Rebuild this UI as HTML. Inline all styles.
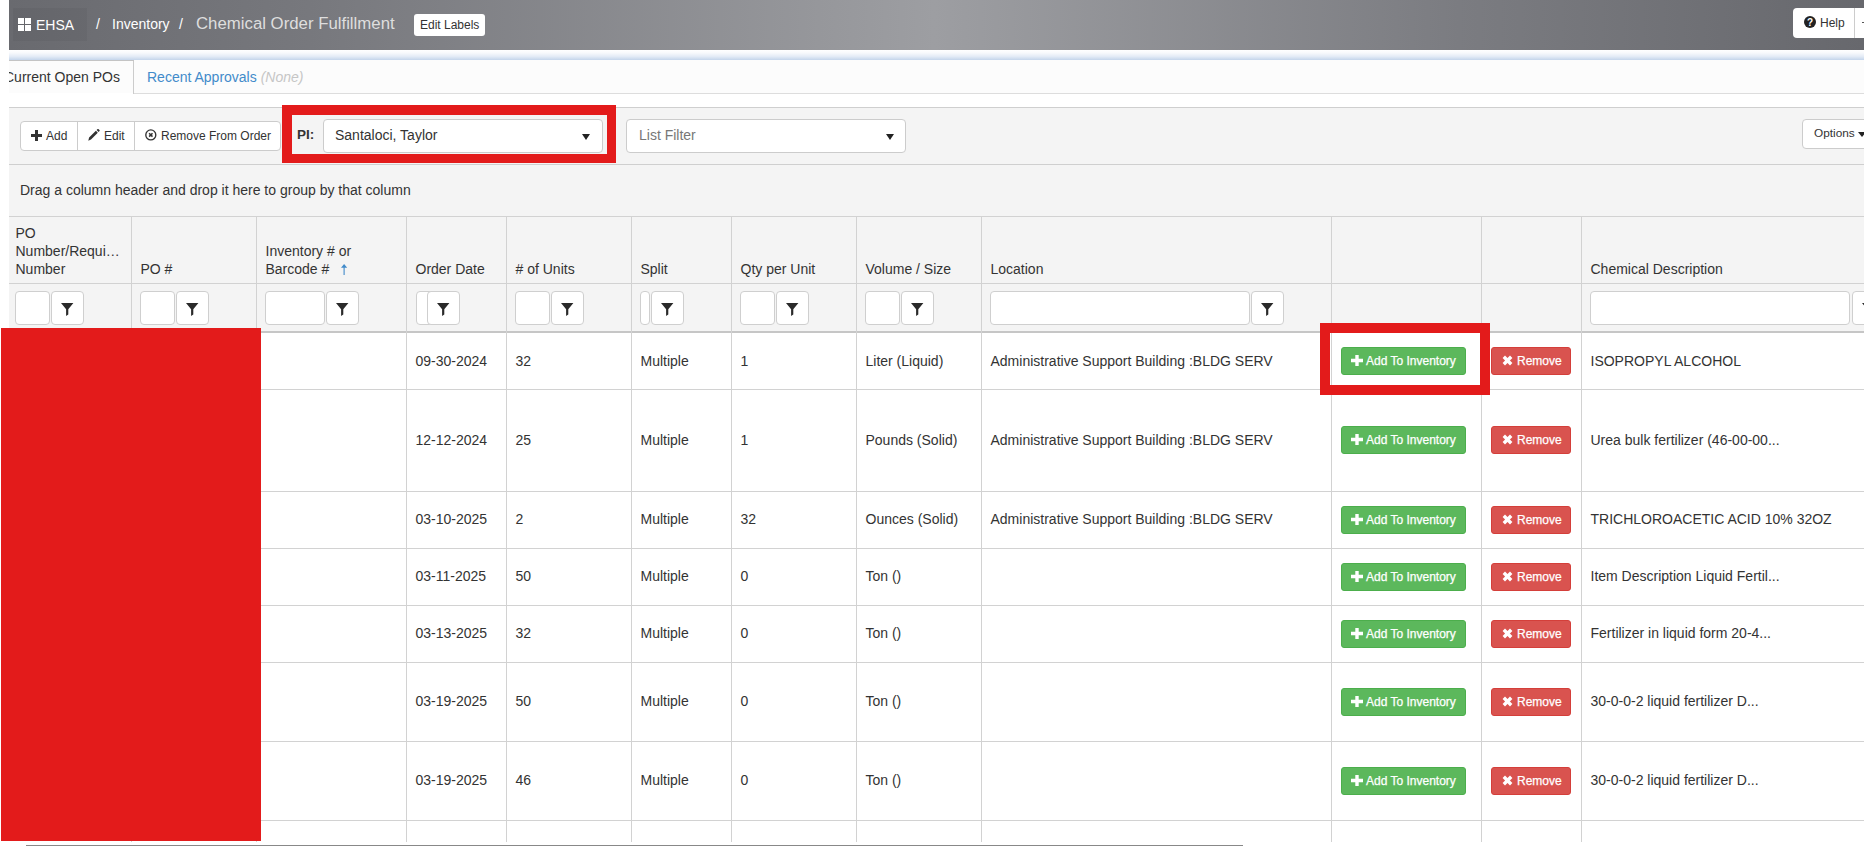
<!DOCTYPE html>
<html><head><meta charset="utf-8">
<style>
*{box-sizing:border-box;margin:0;padding:0}
html,body{width:1864px;height:846px;overflow:hidden;background:#fff;font-family:"Liberation Sans",sans-serif;color:#333}
.a{position:absolute}
.t{position:absolute;white-space:nowrap;line-height:1}
.vl{position:absolute;width:1px;background:#d2d2d2}
.hl{position:absolute;height:1px;background:#d2d2d2}
.box{position:absolute;background:#fff;border:1px solid #cfcfcf;border-radius:4px}
.fb svg{position:absolute;left:9px;top:11px}
.gb{position:absolute;width:125px;height:28px;background:#5cb85c;border:1px solid #4cae4c;border-radius:3px}
.rb{position:absolute;width:80px;height:28px;background:#d9534f;border:1px solid #d43f3a;border-radius:3px}
</style></head><body>

<div class="a" style="left:9px;top:0;width:1855px;height:50px;background:linear-gradient(to right,#696a6f 0px,#77787d 300px,#999a9e 860px,#9d9ea2 925px,#7b7c81 1450px,#67686d 1855px)"></div>
<div class="a" style="left:9px;top:50px;width:1855px;height:10px;background:linear-gradient(to bottom,#ffffff 0%,#f7f9fc 30%,#e3ebf6 65%,#c4d5eb 100%)"></div>
<div class="a" style="left:13px;top:8px;width:74px;height:33px;background:rgba(0,0,0,0.04)"></div>
<div class="a" style="left:18px;top:18px;width:6px;height:6px;background:#fff"></div>
<div class="a" style="left:25px;top:18px;width:6px;height:6px;background:#fff"></div>
<div class="a" style="left:18px;top:25px;width:6px;height:6px;background:#fff"></div>
<div class="a" style="left:25px;top:25px;width:6px;height:6px;background:#fff"></div>
<div class="t" style="left:36px;top:18px;font-size:14px;color:#fff;">EHSA</div>
<div class="t" style="left:96px;top:17px;font-size:14px;color:#fff;">/</div>
<div class="t" style="left:112px;top:17px;font-size:14px;color:#fff;">Inventory</div>
<div class="t" style="left:179px;top:17px;font-size:14px;color:#fff;">/</div>
<div class="t" style="left:196px;top:15.5px;font-size:16.8px;color:#dedede;">Chemical Order Fulfillment</div>
<div class="a" style="left:414px;top:14px;width:71px;height:22px;background:#fff;border-radius:3px"></div>
<div class="t" style="left:420px;top:19px;font-size:12px;color:#333;">Edit Labels</div>
<div class="a" style="left:1793px;top:8px;width:80px;height:30px;background:#fff;border-radius:4px"></div>
<div class="a" style="left:1854px;top:8px;width:1px;height:30px;background:#ccc"></div>
<svg class="a" style="left:1804px;top:16px" width="12" height="12" viewBox="0 0 12 12"><circle cx="6" cy="6" r="6" fill="#222"/><text x="6" y="9.6" font-size="10" font-weight="bold" fill="#fff" text-anchor="middle" font-family="Liberation Sans">?</text></svg>
<div class="t" style="left:1820px;top:17px;font-size:12px;color:#333;">Help</div>
<div class="a" style="left:1862px;top:22px;width:2px;height:1px;background:#555"></div>
<div class="a" style="left:9px;top:60px;width:1855px;height:33px;background:#fcfcfc"></div>
<div class="hl" style="left:133px;top:93px;width:1731px;background:#ddd"></div>
<div class="a" style="left:133px;top:60px;width:1px;height:34px;background:#ccc"></div>
<div class="a" style="left:9px;top:60px;width:125px;height:1px;background:#c4c4c4"></div>
<div class="a" style="left:9px;top:61px;width:124px;height:32px;overflow:hidden"><div class="t" style="left:-5px;top:9px;font-size:14px;color:#333;">Current Open POs</div></div>
<div class="t" style="left:147px;top:70px;font-size:14px;color:#428bca;">Recent Approvals <i style="color:#c6c6c6">(None)</i></div>
<div class="a" style="left:9px;top:107px;width:1855px;height:109px;background:#f4f4f4"></div>
<div class="hl" style="left:9px;top:107px;width:1855px;background:#cfcfcf"></div>
<div class="hl" style="left:9px;top:164px;width:1855px;background:#cfcfcf"></div>
<div class="a" style="left:20px;top:121px;width:261px;height:30px;background:#fff;border:1px solid #ccc;border-radius:4px"></div>
<div class="a" style="left:77px;top:122px;width:1px;height:28px;background:#ccc"></div>
<div class="a" style="left:134px;top:122px;width:1px;height:28px;background:#ccc"></div>
<svg class="a" style="left:31px;top:130px" width="11" height="11" viewBox="0 0 11 11"><path d="M4 0H7V4H11V7H7V11H4V7H0V4H4Z" fill="#333"/></svg>
<div class="t" style="left:46px;top:130px;font-size:12px;color:#333;">Add</div>
<svg class="a" style="left:88px;top:129px" width="12" height="12" viewBox="0 0 12 12"><path d="M0.3 11.7 L1.1 8.6 L7.9 1.8 L9.8 3.7 L3 10.5 Z M8.6 1.1 L9.6 0.1 Q10.1 -0.3 10.6 0.2 L11.5 1.1 Q11.9 1.6 11.5 2.1 L10.5 3.1 Z" fill="#333"/></svg>
<div class="t" style="left:104px;top:130px;font-size:12px;color:#333;">Edit</div>
<svg class="a" style="left:145px;top:129px" width="12" height="12" viewBox="0 0 12 12"><circle cx="5.8" cy="5.9" r="5.0" fill="none" stroke="#333" stroke-width="1.35"/><path d="M4.1 4.2L7.5 7.6M7.5 4.2L4.1 7.6" stroke="#333" stroke-width="1.5"/></svg>
<div class="t" style="left:161px;top:130px;font-size:12px;color:#333;">Remove From Order</div>
<div class="t" style="left:297px;top:128px;font-size:13.5px;font-weight:bold;color:#333">PI:</div>
<div class="a" style="left:323px;top:119px;width:280px;height:34px;background:#fff;border:1px solid #ccc;border-radius:4px"></div>
<div class="t" style="left:335px;top:128px;font-size:14px;color:#333;">Santaloci, Taylor</div>
<svg class="a" style="left:581.5px;top:134px" width="8" height="6" viewBox="0 0 8 6"><path d="M0 0H8L4 6Z" fill="#222"/></svg>
<div class="a" style="left:626px;top:119px;width:280px;height:34px;background:#fff;border:1px solid #ccc;border-radius:4px"></div>
<div class="t" style="left:639px;top:128px;font-size:14px;color:#777;">List Filter</div>
<svg class="a" style="left:885.5px;top:134px" width="8" height="6" viewBox="0 0 8 6"><path d="M0 0H8L4 6Z" fill="#222"/></svg>
<div class="a" style="left:1802px;top:119px;width:80px;height:30px;background:#fff;border:1px solid #ccc;border-radius:4px"></div>
<div class="t" style="left:1814px;top:128px;font-size:11.8px;color:#333;">Options</div>
<svg class="a" style="left:1858px;top:132px" width="8" height="5" viewBox="0 0 8 5"><path d="M0 0H8L4 5Z" fill="#222"/></svg>
<div class="t" style="left:20px;top:183.2px;font-size:14px;color:#333;">Drag a column header and drop it here to group by that column</div>
<div class="a" style="left:9px;top:216px;width:1855px;height:117px;background:#f4f4f4"></div>
<div class="hl" style="left:9px;top:216px;width:1855px"></div>
<div class="hl" style="left:9px;top:283px;width:1855px"></div>
<div class="a" style="left:9px;top:331px;width:1855px;height:2px;background:#c6c6c6"></div>
<div class="vl" style="left:131px;top:216px;height:626px"></div>
<div class="vl" style="left:256px;top:216px;height:626px"></div>
<div class="vl" style="left:406px;top:216px;height:626px"></div>
<div class="vl" style="left:506px;top:216px;height:626px"></div>
<div class="vl" style="left:631px;top:216px;height:626px"></div>
<div class="vl" style="left:731px;top:216px;height:626px"></div>
<div class="vl" style="left:856px;top:216px;height:626px"></div>
<div class="vl" style="left:981px;top:216px;height:626px"></div>
<div class="vl" style="left:1331px;top:216px;height:626px"></div>
<div class="vl" style="left:1481px;top:216px;height:626px"></div>
<div class="vl" style="left:1581px;top:216px;height:626px"></div>
<div class="t" style="left:15.5px;top:226px;font-size:14px;color:#333;">PO</div>
<div class="t" style="left:15.5px;top:244px;font-size:14px;color:#333;">Number/Requi…</div>
<div class="t" style="left:15.5px;top:262px;font-size:14px;color:#333;">Number</div>
<div class="t" style="left:140.5px;top:262px;font-size:14px;color:#333;">PO #</div>
<div class="t" style="left:265.5px;top:244px;font-size:14px;color:#333;">Inventory # or</div>
<div class="t" style="left:265.5px;top:262px;font-size:14px;color:#333;">Barcode #</div>
<svg class="a" style="left:340.5px;top:264px" width="7" height="11" viewBox="0 0 7 11"><path d="M3.1 0L6.2 3.7H3.65V11H2.55V3.7H0Z" fill="#428bca"/></svg>
<div class="t" style="left:415.5px;top:262px;font-size:14px;color:#333;">Order Date</div>
<div class="t" style="left:515.5px;top:262px;font-size:14px;color:#333;"># of Units</div>
<div class="t" style="left:640.5px;top:262px;font-size:14px;color:#333;">Split</div>
<div class="t" style="left:740.5px;top:262px;font-size:14px;color:#333;">Qty per Unit</div>
<div class="t" style="left:865.5px;top:262px;font-size:14px;color:#333;">Volume / Size</div>
<div class="t" style="left:990.5px;top:262px;font-size:14px;color:#333;">Location</div>
<div class="t" style="left:1590.5px;top:262px;font-size:14px;color:#333;">Chemical Description</div>
<div class="box" style="left:15px;top:291px;width:35px;height:34px"></div>
<div class="box fb" style="left:51px;top:291px;width:33px;height:34px"><svg width="13" height="13" viewBox="0 0 13 13"><path d="M0 0 H12.4 L7.3 6.2 V11.6 L5.1 13 V6.2 Z" fill="#2a2a2a"/></svg></div>
<div class="box" style="left:140px;top:291px;width:35px;height:34px"></div>
<div class="box fb" style="left:176px;top:291px;width:33px;height:34px"><svg width="13" height="13" viewBox="0 0 13 13"><path d="M0 0 H12.4 L7.3 6.2 V11.6 L5.1 13 V6.2 Z" fill="#2a2a2a"/></svg></div>
<div class="box" style="left:265px;top:291px;width:60px;height:34px"></div>
<div class="box fb" style="left:326px;top:291px;width:33px;height:34px"><svg width="13" height="13" viewBox="0 0 13 13"><path d="M0 0 H12.4 L7.3 6.2 V11.6 L5.1 13 V6.2 Z" fill="#2a2a2a"/></svg></div>
<div class="box" style="left:416px;top:291px;width:20px;height:34px"></div>
<div class="box fb" style="left:427px;top:291px;width:33px;height:34px"><svg width="13" height="13" viewBox="0 0 13 13"><path d="M0 0 H12.4 L7.3 6.2 V11.6 L5.1 13 V6.2 Z" fill="#2a2a2a"/></svg></div>
<div class="box" style="left:515px;top:291px;width:35px;height:34px"></div>
<div class="box fb" style="left:551px;top:291px;width:33px;height:34px"><svg width="13" height="13" viewBox="0 0 13 13"><path d="M0 0 H12.4 L7.3 6.2 V11.6 L5.1 13 V6.2 Z" fill="#2a2a2a"/></svg></div>
<div class="box" style="left:640px;top:291px;width:10px;height:34px"></div>
<div class="box fb" style="left:651px;top:291px;width:33px;height:34px"><svg width="13" height="13" viewBox="0 0 13 13"><path d="M0 0 H12.4 L7.3 6.2 V11.6 L5.1 13 V6.2 Z" fill="#2a2a2a"/></svg></div>
<div class="box" style="left:740px;top:291px;width:35px;height:34px"></div>
<div class="box fb" style="left:776px;top:291px;width:33px;height:34px"><svg width="13" height="13" viewBox="0 0 13 13"><path d="M0 0 H12.4 L7.3 6.2 V11.6 L5.1 13 V6.2 Z" fill="#2a2a2a"/></svg></div>
<div class="box" style="left:865px;top:291px;width:35px;height:34px"></div>
<div class="box fb" style="left:901px;top:291px;width:33px;height:34px"><svg width="13" height="13" viewBox="0 0 13 13"><path d="M0 0 H12.4 L7.3 6.2 V11.6 L5.1 13 V6.2 Z" fill="#2a2a2a"/></svg></div>
<div class="box" style="left:990px;top:291px;width:260px;height:34px"></div>
<div class="box fb" style="left:1251px;top:291px;width:33px;height:34px"><svg width="13" height="13" viewBox="0 0 13 13"><path d="M0 0 H12.4 L7.3 6.2 V11.6 L5.1 13 V6.2 Z" fill="#2a2a2a"/></svg></div>
<div class="box" style="left:1590px;top:291px;width:260px;height:34px"></div>
<div class="box fb" style="left:1852px;top:291px;width:34px;height:34px"><svg width="13" height="13" viewBox="0 0 13 13"><path d="M0 0 H12.4 L7.3 6.2 V11.6 L5.1 13 V6.2 Z" fill="#2a2a2a"/></svg></div>
<div class="a" style="left:9px;top:333px;width:1855px;height:513px;background:#fff"></div>
<div class="vl" style="left:131px;top:333px;height:509px"></div>
<div class="vl" style="left:256px;top:333px;height:509px"></div>
<div class="vl" style="left:406px;top:333px;height:509px"></div>
<div class="vl" style="left:506px;top:333px;height:509px"></div>
<div class="vl" style="left:631px;top:333px;height:509px"></div>
<div class="vl" style="left:731px;top:333px;height:509px"></div>
<div class="vl" style="left:856px;top:333px;height:509px"></div>
<div class="vl" style="left:981px;top:333px;height:509px"></div>
<div class="vl" style="left:1331px;top:333px;height:509px"></div>
<div class="vl" style="left:1481px;top:333px;height:509px"></div>
<div class="vl" style="left:1581px;top:333px;height:509px"></div>
<div class="hl" style="left:9px;top:389px;width:1855px"></div>
<div class="hl" style="left:9px;top:491px;width:1855px"></div>
<div class="hl" style="left:9px;top:548px;width:1855px"></div>
<div class="hl" style="left:9px;top:605px;width:1855px"></div>
<div class="hl" style="left:9px;top:662px;width:1855px"></div>
<div class="hl" style="left:9px;top:741px;width:1855px"></div>
<div class="hl" style="left:9px;top:820px;width:1855px"></div>
<div class="t" style="left:415.5px;top:354px;font-size:14px;color:#333;">09-30-2024</div>
<div class="t" style="left:515.5px;top:354px;font-size:14px;color:#333;">32</div>
<div class="t" style="left:640.5px;top:354px;font-size:14px;color:#333;">Multiple</div>
<div class="t" style="left:740.5px;top:354px;font-size:14px;color:#333;">1</div>
<div class="t" style="left:865.5px;top:354px;font-size:14px;color:#333;">Liter (Liquid)</div>
<div class="t" style="left:990.5px;top:354px;font-size:14px;color:#333;">Administrative Support Building :BLDG SERV</div>
<div class="t" style="left:1590.5px;top:354px;font-size:14px;color:#333;">ISOPROPYL ALCOHOL</div>
<div class="gb" style="left:1341px;top:347px"></div>
<div class="t" style="left:1366px;top:355px;font-size:12px;color:#fff;-webkit-text-stroke:0.25px #fff">Add To Inventory</div>
<svg class="a" style="left:1351px;top:355px" width="12" height="11" viewBox="0 0 12 11"><path d="M4.3 0H7.7V3.8H12V7.2H7.7V11H4.3V7.2H0V3.8H4.3Z" fill="#fff"/></svg>
<div class="rb" style="left:1491px;top:347px"></div>
<div class="t" style="left:1517px;top:355px;font-size:12px;color:#fff;-webkit-text-stroke:0.25px #fff">Remove</div>
<svg class="a" style="left:1502px;top:354.5px" width="11" height="11" viewBox="0 0 11 11"><path d="M1.8 1.8L9.2 9.2M9.2 1.8L1.8 9.2" stroke="#fff" stroke-width="3.4"/></svg>
<div class="t" style="left:415.5px;top:433px;font-size:14px;color:#333;">12-12-2024</div>
<div class="t" style="left:515.5px;top:433px;font-size:14px;color:#333;">25</div>
<div class="t" style="left:640.5px;top:433px;font-size:14px;color:#333;">Multiple</div>
<div class="t" style="left:740.5px;top:433px;font-size:14px;color:#333;">1</div>
<div class="t" style="left:865.5px;top:433px;font-size:14px;color:#333;">Pounds (Solid)</div>
<div class="t" style="left:990.5px;top:433px;font-size:14px;color:#333;">Administrative Support Building :BLDG SERV</div>
<div class="t" style="left:1590.5px;top:433px;font-size:14px;color:#333;">Urea bulk fertilizer (46-00-00...</div>
<div class="gb" style="left:1341px;top:426px"></div>
<div class="t" style="left:1366px;top:434px;font-size:12px;color:#fff;-webkit-text-stroke:0.25px #fff">Add To Inventory</div>
<svg class="a" style="left:1351px;top:434px" width="12" height="11" viewBox="0 0 12 11"><path d="M4.3 0H7.7V3.8H12V7.2H7.7V11H4.3V7.2H0V3.8H4.3Z" fill="#fff"/></svg>
<div class="rb" style="left:1491px;top:426px"></div>
<div class="t" style="left:1517px;top:434px;font-size:12px;color:#fff;-webkit-text-stroke:0.25px #fff">Remove</div>
<svg class="a" style="left:1502px;top:433.5px" width="11" height="11" viewBox="0 0 11 11"><path d="M1.8 1.8L9.2 9.2M9.2 1.8L1.8 9.2" stroke="#fff" stroke-width="3.4"/></svg>
<div class="t" style="left:415.5px;top:512px;font-size:14px;color:#333;">03-10-2025</div>
<div class="t" style="left:515.5px;top:512px;font-size:14px;color:#333;">2</div>
<div class="t" style="left:640.5px;top:512px;font-size:14px;color:#333;">Multiple</div>
<div class="t" style="left:740.5px;top:512px;font-size:14px;color:#333;">32</div>
<div class="t" style="left:865.5px;top:512px;font-size:14px;color:#333;">Ounces (Solid)</div>
<div class="t" style="left:990.5px;top:512px;font-size:14px;color:#333;">Administrative Support Building :BLDG SERV</div>
<div class="t" style="left:1590.5px;top:512px;font-size:14px;color:#333;">TRICHLOROACETIC ACID 10% 32OZ</div>
<div class="gb" style="left:1341px;top:506px"></div>
<div class="t" style="left:1366px;top:514px;font-size:12px;color:#fff;-webkit-text-stroke:0.25px #fff">Add To Inventory</div>
<svg class="a" style="left:1351px;top:514px" width="12" height="11" viewBox="0 0 12 11"><path d="M4.3 0H7.7V3.8H12V7.2H7.7V11H4.3V7.2H0V3.8H4.3Z" fill="#fff"/></svg>
<div class="rb" style="left:1491px;top:506px"></div>
<div class="t" style="left:1517px;top:514px;font-size:12px;color:#fff;-webkit-text-stroke:0.25px #fff">Remove</div>
<svg class="a" style="left:1502px;top:513.5px" width="11" height="11" viewBox="0 0 11 11"><path d="M1.8 1.8L9.2 9.2M9.2 1.8L1.8 9.2" stroke="#fff" stroke-width="3.4"/></svg>
<div class="t" style="left:415.5px;top:569px;font-size:14px;color:#333;">03-11-2025</div>
<div class="t" style="left:515.5px;top:569px;font-size:14px;color:#333;">50</div>
<div class="t" style="left:640.5px;top:569px;font-size:14px;color:#333;">Multiple</div>
<div class="t" style="left:740.5px;top:569px;font-size:14px;color:#333;">0</div>
<div class="t" style="left:865.5px;top:569px;font-size:14px;color:#333;">Ton ()</div>
<div class="t" style="left:1590.5px;top:569px;font-size:14px;color:#333;">Item Description Liquid Fertil...</div>
<div class="gb" style="left:1341px;top:563px"></div>
<div class="t" style="left:1366px;top:571px;font-size:12px;color:#fff;-webkit-text-stroke:0.25px #fff">Add To Inventory</div>
<svg class="a" style="left:1351px;top:571px" width="12" height="11" viewBox="0 0 12 11"><path d="M4.3 0H7.7V3.8H12V7.2H7.7V11H4.3V7.2H0V3.8H4.3Z" fill="#fff"/></svg>
<div class="rb" style="left:1491px;top:563px"></div>
<div class="t" style="left:1517px;top:571px;font-size:12px;color:#fff;-webkit-text-stroke:0.25px #fff">Remove</div>
<svg class="a" style="left:1502px;top:570.5px" width="11" height="11" viewBox="0 0 11 11"><path d="M1.8 1.8L9.2 9.2M9.2 1.8L1.8 9.2" stroke="#fff" stroke-width="3.4"/></svg>
<div class="t" style="left:415.5px;top:626px;font-size:14px;color:#333;">03-13-2025</div>
<div class="t" style="left:515.5px;top:626px;font-size:14px;color:#333;">32</div>
<div class="t" style="left:640.5px;top:626px;font-size:14px;color:#333;">Multiple</div>
<div class="t" style="left:740.5px;top:626px;font-size:14px;color:#333;">0</div>
<div class="t" style="left:865.5px;top:626px;font-size:14px;color:#333;">Ton ()</div>
<div class="t" style="left:1590.5px;top:626px;font-size:14px;color:#333;">Fertilizer in liquid form 20-4...</div>
<div class="gb" style="left:1341px;top:620px"></div>
<div class="t" style="left:1366px;top:628px;font-size:12px;color:#fff;-webkit-text-stroke:0.25px #fff">Add To Inventory</div>
<svg class="a" style="left:1351px;top:628px" width="12" height="11" viewBox="0 0 12 11"><path d="M4.3 0H7.7V3.8H12V7.2H7.7V11H4.3V7.2H0V3.8H4.3Z" fill="#fff"/></svg>
<div class="rb" style="left:1491px;top:620px"></div>
<div class="t" style="left:1517px;top:628px;font-size:12px;color:#fff;-webkit-text-stroke:0.25px #fff">Remove</div>
<svg class="a" style="left:1502px;top:627.5px" width="11" height="11" viewBox="0 0 11 11"><path d="M1.8 1.8L9.2 9.2M9.2 1.8L1.8 9.2" stroke="#fff" stroke-width="3.4"/></svg>
<div class="t" style="left:415.5px;top:694px;font-size:14px;color:#333;">03-19-2025</div>
<div class="t" style="left:515.5px;top:694px;font-size:14px;color:#333;">50</div>
<div class="t" style="left:640.5px;top:694px;font-size:14px;color:#333;">Multiple</div>
<div class="t" style="left:740.5px;top:694px;font-size:14px;color:#333;">0</div>
<div class="t" style="left:865.5px;top:694px;font-size:14px;color:#333;">Ton ()</div>
<div class="t" style="left:1590.5px;top:694px;font-size:14px;color:#333;">30-0-0-2 liquid fertilizer D...</div>
<div class="gb" style="left:1341px;top:688px"></div>
<div class="t" style="left:1366px;top:696px;font-size:12px;color:#fff;-webkit-text-stroke:0.25px #fff">Add To Inventory</div>
<svg class="a" style="left:1351px;top:696px" width="12" height="11" viewBox="0 0 12 11"><path d="M4.3 0H7.7V3.8H12V7.2H7.7V11H4.3V7.2H0V3.8H4.3Z" fill="#fff"/></svg>
<div class="rb" style="left:1491px;top:688px"></div>
<div class="t" style="left:1517px;top:696px;font-size:12px;color:#fff;-webkit-text-stroke:0.25px #fff">Remove</div>
<svg class="a" style="left:1502px;top:695.5px" width="11" height="11" viewBox="0 0 11 11"><path d="M1.8 1.8L9.2 9.2M9.2 1.8L1.8 9.2" stroke="#fff" stroke-width="3.4"/></svg>
<div class="t" style="left:415.5px;top:773px;font-size:14px;color:#333;">03-19-2025</div>
<div class="t" style="left:515.5px;top:773px;font-size:14px;color:#333;">46</div>
<div class="t" style="left:640.5px;top:773px;font-size:14px;color:#333;">Multiple</div>
<div class="t" style="left:740.5px;top:773px;font-size:14px;color:#333;">0</div>
<div class="t" style="left:865.5px;top:773px;font-size:14px;color:#333;">Ton ()</div>
<div class="t" style="left:1590.5px;top:773px;font-size:14px;color:#333;">30-0-0-2 liquid fertilizer D...</div>
<div class="gb" style="left:1341px;top:767px"></div>
<div class="t" style="left:1366px;top:775px;font-size:12px;color:#fff;-webkit-text-stroke:0.25px #fff">Add To Inventory</div>
<svg class="a" style="left:1351px;top:775px" width="12" height="11" viewBox="0 0 12 11"><path d="M4.3 0H7.7V3.8H12V7.2H7.7V11H4.3V7.2H0V3.8H4.3Z" fill="#fff"/></svg>
<div class="rb" style="left:1491px;top:767px"></div>
<div class="t" style="left:1517px;top:775px;font-size:12px;color:#fff;-webkit-text-stroke:0.25px #fff">Remove</div>
<svg class="a" style="left:1502px;top:774.5px" width="11" height="11" viewBox="0 0 11 11"><path d="M1.8 1.8L9.2 9.2M9.2 1.8L1.8 9.2" stroke="#fff" stroke-width="3.4"/></svg>
<div class="a" style="left:26px;top:845px;width:1217px;height:1px;background:#888"></div>
<div class="a" style="left:1px;top:328px;width:260px;height:513px;background:#e31b1b"></div>
<div class="a" style="left:282px;top:105px;width:334px;height:58px;border:10px solid #e31b1b;border-right-width:9px;border-bottom-width:9px"></div>
<div class="a" style="left:1320px;top:323px;width:170px;height:72px;border:10px solid #e31b1b"></div>
</body></html>
